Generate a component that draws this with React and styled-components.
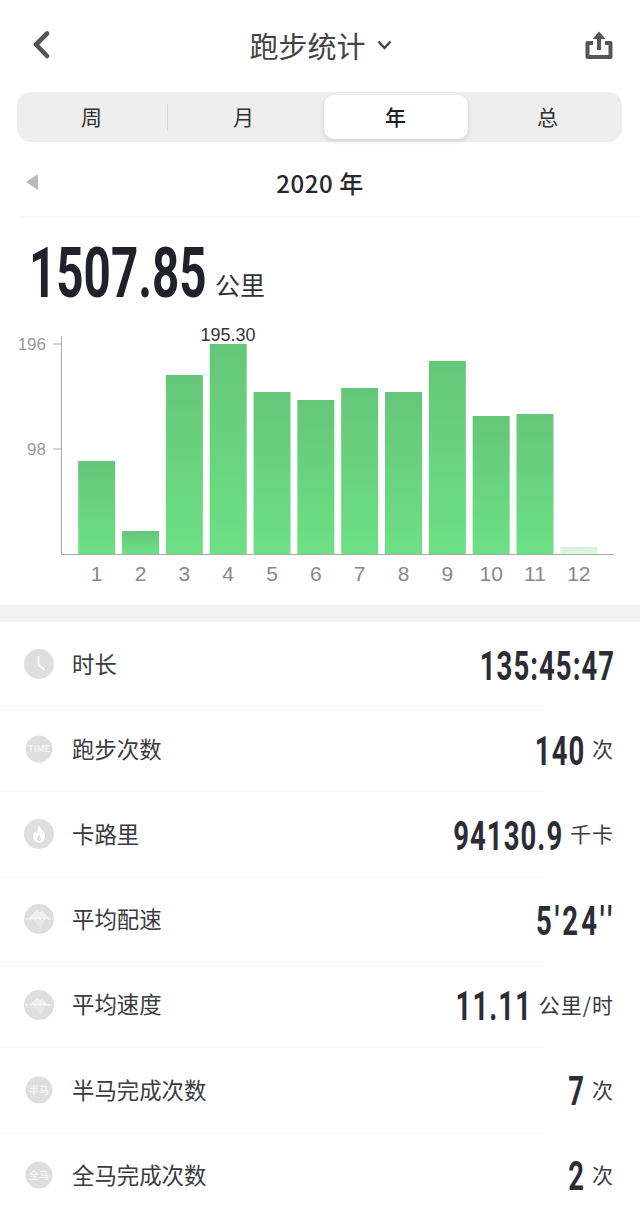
import React from "react";
import styled, { createGlobalStyle } from "styled-components";

const Global = createGlobalStyle`
  html, body { margin: 0; padding: 0; background: #fff; }
  body { font-family: "Liberation Sans", "Noto Sans CJK SC", sans-serif; }
`;
const CJK = `"Noto Sans CJK SC", "Liberation Sans", sans-serif`;
const NUM = `"Roboto", "Liberation Sans", "Noto Sans CJK SC", sans-serif`;

const Page = styled.div`
  width: 640px; height: 1205px; overflow: hidden; background: #fff; display: flex; flex-direction: column;
`;
const Header = styled.header`
  height: 92px; flex: none; box-sizing: border-box; padding: 0 26px 2px 32px; display: flex; align-items: center; justify-content: space-between;
`;
const Title = styled.div`
  display: flex; align-items: center; gap: 11px; font: 400 29px/40px ${CJK}; color: #444; margin-left: 7px;
`;
const Tabs = styled.div`
  margin: 0 18px 0 17px; height: 50px; border-radius: 14px; background: #eeeeee; display: grid;
  grid-template-columns: repeat(4, 152px); justify-content: center; align-items: center; flex: none;
`;
const Tab = styled.div`
  position: relative; height: 44px; display: flex; align-items: center; justify-content: center; padding-bottom: 2px; box-sizing: border-box;
  font: ${p => (p.$active ? 500 : 400)} 21px/1 ${CJK}; color: ${p => (p.$active ? "#1c1c1e" : "#333")};
  ${p => p.$active && `
    background: #fff; border-radius: 10px; margin: 0 4px; box-shadow: 0 2px 5px rgba(0,0,0,.12);
  `}
  ${p => p.$divider && `
    &::after { content: ""; position: absolute; right: 0; top: 9px; height: 27px; width: 1px; background: #d8d8d8; }
  `}
`;
const YearRow = styled.div`
  position: relative; height: 75px; margin-left: 20px; border-bottom: 1px solid #f6f6f6; display: flex; align-items: center; justify-content: center;
  flex: none; box-sizing: border-box; padding-right: 20px;
`;
const YearText = styled.div`
  font: 500 24px/1 ${CJK}; color: #26262c; letter-spacing: .6px; margin-top: 7px;
`;
const PrevArrow = styled.svg`
  position: absolute; left: 6px; top: 32px;
`;
const TotalRow = styled.div`
  height: 103px; flex: none; display: flex; align-items: center; padding: 8px 0 0 29px; box-sizing: border-box;
`;
const BigNum = styled.div`
  font: 700 70px/1 ${NUM}; color: #20212b; width: 186px; white-space: nowrap;
  transform: scaleX(.68); transform-origin: left center;
`;
const BigUnit = styled.div`
  font: 400 25px/1 ${CJK}; color: #333; align-self: flex-end; margin: 0 0 23px 0;
`;
const ChartWrap = styled.div`
  height: 285px; flex: none;
`;
const Band = styled.div`
  height: 17px; background: #f2f2f2; flex: none;
`;
const Row = styled.div`
  position: relative; height: 85.15px; flex: none; box-sizing: border-box; display: flex; align-items: center; padding: 0 27px 0 24px;
  &::after { content: ""; position: absolute; left: 0; bottom: 0; width: 545px; height: 1px; background: #f6f6f6; }
`;
const IconBox = styled.div`
  width: 30px; height: 30px; flex: none; margin-top: -1px;
`;
const Label = styled.div`
  font: 400 22.4px/1 ${CJK}; color: #3a3a40; margin-left: 18px; margin-top: -3px; flex: 1;
`;
const Value = styled.div`
  font: 700 41px/1 ${NUM}; color: #2b2c36; white-space: nowrap; font-kerning: none;
  letter-spacing: ${p => p.$ls}px; transform: scaleX(.67); transform-origin: right center; margin: 3px -2px 0 0;
`;
const Unit = styled.div`
  font: 400 21px/1 ${CJK}; color: #3a3a40; letter-spacing: 1px; margin: -2px -1px 0 9px; white-space: nowrap;
`;

const tops = [461, 531, 375, 344, 392, 400, 388, 392, 361, 416, 414, 547];
const Chart = () => (
  <svg width="640" height="285" viewBox="0 320 640 285">
    <defs>
      <linearGradient id="bar" x1="0" y1="0" x2="0" y2="1">
        <stop offset="0" stopColor="#65c679" />
        <stop offset="1" stopColor="#6de085" />
      </linearGradient>
    </defs>
    {tops.map((t, i) => (
      <rect key={i} x={78.2 + i * 43.83} y={t} width="37" height={554 - t} fill="url(#bar)" opacity={i === 11 ? 0.25 : 1} />
    ))}
    <path d="M61.5 336V554.5H614M53 344H61M53 449H61" fill="none" stroke="#aaa" strokeWidth="1" />
    <g fontFamily="Liberation Sans, sans-serif" fontSize="17" fill="#999" textAnchor="end">
      <text x="46" y="350">196</text>
      <text x="46" y="455">98</text>
    </g>
    <text x="228" y="341" fontFamily="Liberation Sans, sans-serif" fontSize="18" fill="#333" textAnchor="middle">195.30</text>
    <g fontFamily="Liberation Sans, sans-serif" fontSize="21" fill="#888" textAnchor="middle">
      {tops.map((_, i) => (
        <text key={i} x={96.7 + i * 43.83} y="581">{i + 1}</text>
      ))}
    </g>
  </svg>
);

const Disc = ({ r = 15, children }) => (
  <svg width="30" height="30" viewBox="0 0 30 30">
    <circle cx="15" cy="15" r={r} fill="#dedede" />
    {children}
  </svg>
);
const TinyText = ({ children, size = 8 }) => (
  <text x="15" y={15 + size * 0.36} textAnchor="middle" fontSize={size} fontWeight="700" fill="#f4f4f4" fontFamily={CJK}>{children}</text>
);
const Mountain = ({ low }) => (
  <g>
    <path d={low ? "M5 15 L13 8 L16 10 L18 9 L25 15Z" : "M4 15 L13 5.5 L16 8 L18 6.5 L26 15Z"} fill="#f0f0f0" />
    <path d="M1 15H29" stroke="#fff" strokeWidth="1.2" strokeDasharray="3 1.5" />
    <path d="M9 16 L21 16 L17 25Z" fill="#e8e8e8" />
  </g>
);
const icons = {
  clock: <Disc><path d="M14.5 7V16L21 21" fill="none" stroke="#fff" strokeWidth="1.6" /></Disc>,
  time: <Disc r={13.5}><TinyText size={9}>TIME</TinyText></Disc>,
  flame: <Disc>
    <path d="M15 6C16 10 21 12 21 17.5C21 21 18.3 23.5 15 23.5C11.7 23.5 9 21 9 17.5C9 15 10.5 13.5 11.5 12C12 13.5 12.5 14 13 14.3C13.5 12 14 9 15 6Z" fill="#fff" />
    <path d="M15 15C15.5 17 17 18 17 20C17 21.2 16 22 15 22C14 22 13 21.2 13 20C13 18 14.5 17 15 15Z" fill="#dedede" />
  </Disc>,
  pace: <Disc><Mountain /></Disc>,
  speed: <Disc><Mountain low /></Disc>,
  half: <Disc r={13.5}><TinyText size={10}>半马</TinyText></Disc>,
  full: <Disc r={13.5}><TinyText size={10}>全马</TinyText></Disc>,
};

const rows = [
  { icon: "clock", label: "时长", value: "135:45:47" },
  { icon: "time", label: "跑步次数", value: "140", unit: "次" },
  { icon: "flame", label: "卡路里", value: "94130.9", unit: "千卡" },
  { icon: "pace", label: "平均配速", value: "5'24''", ls: 4.6 },
  { icon: "speed", label: "平均速度", value: "11.11", unit: "公里/时" },
  { icon: "half", label: "半马完成次数", value: "7", unit: "次" },
  { icon: "full", label: "全马完成次数", value: "2", unit: "次" },
];

export default function App() {
  return (
    <Page>
      <Global />
      <Header>
        <svg width="18" height="28" viewBox="0 0 18 28"><path d="M15 2.5L4 13.5L15 25" fill="none" stroke="#555" strokeWidth="4.6" strokeLinejoin="round" strokeLinecap="round" /></svg>
        <Title>
          跑步统计
          <svg width="15" height="10" viewBox="0 0 15 10"><path d="M1.5 1.5L7.5 8L13.5 1.5" fill="none" stroke="#444" strokeWidth="2.4" /></svg>
        </Title>
        <svg width="30" height="30" viewBox="0 0 30 30">
          <path d="M9 13H3.5V27H26.5V13H21" fill="none" stroke="#555" strokeWidth="4" strokeLinejoin="round" />
          <path d="M15 20V4" stroke="#555" strokeWidth="4" />
          <path d="M8.5 9L15 1.5L21.5 9Z" fill="#555" />
        </svg>
      </Header>
      <Tabs>
        <Tab $divider>周</Tab>
        <Tab>月</Tab>
        <Tab $active>年</Tab>
        <Tab>总</Tab>
      </Tabs>
      <YearRow>
        <PrevArrow width="12" height="16" viewBox="0 0 12 16"><path d="M12 0V16L0 8Z" fill="#bbb" /></PrevArrow>
        <YearText>2020 年</YearText>
      </YearRow>
      <TotalRow>
        <BigNum>1507.85</BigNum>
        <BigUnit>公里</BigUnit>
      </TotalRow>
      <ChartWrap><Chart /></ChartWrap>
      <Band />
      {rows.map(r => (
        <Row key={r.label}>
          <IconBox>{icons[r.icon]}</IconBox>
          <Label>{r.label}</Label>
          <Value $ls={r.ls ?? 1.6}>{r.value}</Value>
          {r.unit && <Unit>{r.unit}</Unit>}
        </Row>
      ))}
    </Page>
  );
}
